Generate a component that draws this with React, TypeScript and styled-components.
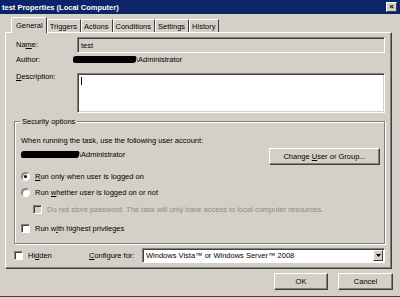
import styled, { createGlobalStyle } from 'styled-components';

const GlobalStyle = createGlobalStyle`
  html, body { margin: 0; padding: 0; }
  body {
    font-family: 'Liberation Sans', Arial, sans-serif;
    font-size: 7.5px;
    line-height: 9px;
    color: #000;
    background: #d4d0c8;
  }
`;

const Window = styled.div`
  width: 400px;
  height: 297px;
  box-sizing: border-box;
  background: #d4d0c8;
  border-bottom: 1px solid #404040;
  display: flex;
  flex-direction: column;
  overflow: hidden;
`;

const TitleBar = styled.div`
  height: 14px;
  background: #0c2468;
  color: #fff;
  font-weight: bold;
  display: flex;
  align-items: center;
  justify-content: space-between;
  padding: 0 3px 0 2px;
  box-sizing: border-box;
`;

const CloseButton = styled.div`
  width: 9px;
  height: 8px;
  background: #d4d0c8;
  border: 1px solid;
  border-color: #fff #404040 #404040 #fff;
  color: #000;
  font-size: 8px;
  line-height: 8px;
  text-align: center;
  font-weight: bold;
`;

const Body = styled.div`
  flex: 1;
  padding: 3px 8px 0 5px;
  display: flex;
  flex-direction: column;
`;

const TabRow = styled.div`
  display: flex;
  align-items: flex-end;
  height: 15px;
  padding-left: 8px;
`;

const Tab = styled.div<{ $active?: boolean }>`
  height: ${(p) => (p.$active ? 16 : 13)}px;
  padding: 0 3px 0 ${(p) => (p.$active ? 4 : 2)}px;
  box-sizing: border-box;
  display: flex;
  align-items: center;
  border-left: 1px solid #fff;
  border-top: 1px solid #fff;
  border-right: 1px solid #404040;
  background: #d4d0c8;
  margin-left: ${(p) => (p.$active ? -2 : 0)}px;
  margin-bottom: ${(p) => (p.$active ? -1 : 0)}px;
  position: relative;
  z-index: ${(p) => (p.$active ? 1 : 0)};
`;

const Panel = styled.div`
  height: 237px;
  box-sizing: border-box;
  border: 1px solid;
  border-color: #fff #404040 #404040 #fff;
  box-shadow: inset -1px -1px 0 #808080;
  padding: 4px 6px 0 10px;
  display: flex;
  flex-direction: column;
`;

const FieldRow = styled.div<{ $top?: number }>`
  display: grid;
  grid-template-columns: 61px 1fr;
  margin-top: ${(p) => p.$top ?? 0}px;
  align-items: start;
`;

const Label = styled.span<{ $offset: number }>`
  margin-top: ${(p) => p.$offset}px;
`;

const TextField = styled.div<{ $readOnly?: boolean; $height: number }>`
  height: ${(p) => p.$height}px;
  box-sizing: border-box;
  background: ${(p) => (p.$readOnly ? '#d4d0c8' : '#fff')};
  border: 1px solid;
  border-color: #808080 #fff #fff #808080;
  box-shadow: inset 1px 1px 0 #404040, inset -1px -1px 0 #d4d0c8;
  padding: 3px 3px;
`;

const Caret = styled.span`
  display: inline-block;
  width: 1px;
  height: 8px;
  background: #000;
`;

const Redacted = styled.span<{ $width: number }>`
  display: inline-block;
  width: ${(p) => p.$width}px;
  height: 7px;
  background: #000;
  border-radius: 3px 1px 3px 2px;
  vertical-align: -1px;
`;

const GroupBox = styled.div`
  margin: 8px 0 0 -2px;
  padding: 14px 4px 10px 6px;
  width: 371px;
  box-sizing: border-box;
  border: 1px solid #808080;
  box-shadow: inset 1px 1px 0 #fff, 1px 1px 0 #fff;
  display: flex;
  flex-direction: column;
  position: relative;
`;

const Legend = styled.span`
  position: absolute;
  top: -5px;
  left: 5px;
  padding: 0 2px;
  background: #d4d0c8;
`;

const AccountRow = styled.div`
  display: flex;
  justify-content: space-between;
  align-items: flex-start;
  margin-top: 3px;
`;

const AccountText = styled.span`
  margin-top: 2px;
`;

const Button = styled.div<{ $width: number }>`
  width: ${(p) => p.$width}px;
  height: 17px;
  box-sizing: border-box;
  border: 1px solid;
  border-color: #fff #404040 #404040 #fff;
  box-shadow: inset -1px -1px 0 #808080;
  display: flex;
  align-items: center;
  justify-content: center;
  background: #d4d0c8;
`;

const OptionRow = styled.div<{ $indent?: number; $top: number; $disabled?: boolean }>`
  display: flex;
  align-items: center;
  gap: 5px;
  height: 9px;
  margin-top: ${(p) => p.$top}px;
  margin-left: ${(p) => p.$indent ?? 0}px;
  color: ${(p) => (p.$disabled ? '#8c8a86' : '#000')};
`;

const Radio = styled.span<{ $checked?: boolean }>`
  width: 7px;
  height: 7px;
  border-radius: 50%;
  background: #fff;
  box-shadow: inset 1px 1px 0 #808080;
  border: 1px solid;
  border-color: #808080 #fff #fff #808080;
  position: relative;
  flex-shrink: 0;

  &::after {
    content: '';
    display: ${(p) => (p.$checked ? 'block' : 'none')};
    position: absolute;
    left: 2px;
    top: 2px;
    width: 3px;
    height: 3px;
    border-radius: 50%;
    background: #000;
  }
`;

const Check = styled.span<{ $disabled?: boolean }>`
  width: 7px;
  height: 7px;
  background: ${(p) => (p.$disabled ? '#d4d0c8' : '#fff')};
  border: 1px solid;
  border-color: #808080 #fff #fff #808080;
  box-shadow: inset 1px 1px 0 #404040;
  flex-shrink: 0;
`;

const BottomRow = styled.div`
  display: flex;
  align-items: center;
  margin-top: 4px;
  margin-left: -2px;
`;

const HiddenOption = styled.div`
  display: flex;
  align-items: center;
  gap: 5px;
  width: 75px;
`;

const ConfigureLabel = styled.span`
  width: 53px;
`;

const Select = styled.div`
  flex: 1;
  height: 15px;
  box-sizing: border-box;
  background: #fff;
  border: 1px solid;
  border-color: #808080 #fff #fff #808080;
  box-shadow: inset 1px 1px 0 #404040;
  display: flex;
  align-items: center;
  padding-left: 3px;
  justify-content: space-between;
`;

const SelectArrow = styled.span`
  width: 10px;
  height: 11px;
  box-sizing: border-box;
  background: #d4d0c8;
  border: 1px solid;
  border-color: #fff #404040 #404040 #fff;
  display: flex;
  align-items: center;
  justify-content: center;
  margin-right: 1px;
`;

const Footer = styled.div`
  display: flex;
  justify-content: flex-end;
  gap: 10px;
  padding-top: 4px;
  margin-right: -1px;
`;

const U = styled.span`
  text-decoration: underline;
`;

export default function App() {
  return (
    <Window>
      <GlobalStyle />
      <TitleBar>
        <span>test Properties (Local Computer)</span>
        <CloseButton>×</CloseButton>
      </TitleBar>
      <Body>
        <TabRow>
          <Tab $active>General</Tab>
          <Tab>Triggers</Tab>
          <Tab>Actions</Tab>
          <Tab>Conditions</Tab>
          <Tab>Settings</Tab>
          <Tab>History</Tab>
        </TabRow>
        <Panel>
          <FieldRow>
            <Label $offset={3}>
              Na<U>m</U>e:
            </Label>
            <TextField $readOnly $height={16}>test</TextField>
          </FieldRow>
          <FieldRow $top={2}>
            <Label $offset={0}>Author:</Label>
            <span style={{ marginLeft: -4 }}>
              <Redacted $width={63} />\Administrator
            </span>
          </FieldRow>
          <FieldRow $top={9}>
            <Label $offset={-1}>
              <U>D</U>escription:
            </Label>
            <TextField $height={40}>
              <Caret />
            </TextField>
          </FieldRow>
          <GroupBox>
            <Legend>Security options</Legend>
            <span>When running the task, use the following user account:</span>
            <AccountRow>
              <AccountText>
                <Redacted $width={58} />\Administrator
              </AccountText>
              <Button $width={111}>
                <span>
                  Change <U>U</U>ser or Group...
                </span>
              </Button>
            </AccountRow>
            <OptionRow $top={7}>
              <Radio $checked />
              <span>
                <U>R</U>un only when user is logged on
              </span>
            </OptionRow>
            <OptionRow $top={7}>
              <Radio />
              <span>
                Run <U>w</U>hether user is logged on or not
              </span>
            </OptionRow>
            <OptionRow $top={8} $indent={12} $disabled>
              <Check $disabled />
              <span>Do not store password. The task will only have access to local computer resources.</span>
            </OptionRow>
            <OptionRow $top={10}>
              <Check />
              <span>
                Run w<U>i</U>th highest privileges
              </span>
            </OptionRow>
          </GroupBox>
          <BottomRow>
            <HiddenOption>
              <Check />
              <span>
                Hi<U>d</U>den
              </span>
            </HiddenOption>
            <ConfigureLabel>
              <U>C</U>onfigure for:
            </ConfigureLabel>
            <Select>
              <span>Windows Vista™ or Windows Server™ 2008</span>
              <SelectArrow>
                <svg width="5" height="3" viewBox="0 0 5 3">
                  <path d="M0 0h5L2.5 3z" fill="#000" />
                </svg>
              </SelectArrow>
            </Select>
          </BottomRow>
        </Panel>
        <Footer>
          <Button $width={54}>OK</Button>
          <Button $width={55}>Cancel</Button>
        </Footer>
      </Body>
    </Window>
  );
}
